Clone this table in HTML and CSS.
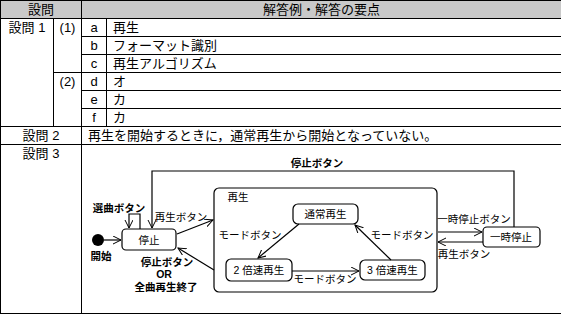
FILE: index.html
```html
<!DOCTYPE html>
<html lang="ja">
<head>
<meta charset="utf-8">
<title>解答例</title>
<link rel="stylesheet" href="styles.css">
</head>
<body>
<table class="answers">
  <colgroup>
    <col class="c1"><col class="c2"><col class="c3"><col class="c4">
  </colgroup>
  <tr class="head">
    <th colspan="2">設問</th>
    <th colspan="2">解答例・解答の要点</th>
  </tr>
  <tr>
    <td rowspan="6" class="q">設問 1</td>
    <td rowspan="3" class="sub">(1)</td>
    <td class="let">a</td>
    <td class="ans">再生</td>
  </tr>
  <tr><td class="let">b</td><td class="ans">フォーマット識別</td></tr>
  <tr><td class="let">c</td><td class="ans">再生アルゴリズム</td></tr>
  <tr>
    <td rowspan="3" class="sub">(2)</td>
    <td class="let">d</td>
    <td class="ans">オ</td>
  </tr>
  <tr><td class="let">e</td><td class="ans">カ</td></tr>
  <tr><td class="let">f</td><td class="ans">カ</td></tr>
  <tr>
    <td colspan="2" class="q">設問 2</td>
    <td colspan="2" class="ans">再生を開始するときに，通常再生から開始となっていない。</td>
  </tr>
  <tr class="diagram-row">
    <td colspan="2" class="q">設問 3</td>
    <td colspan="2" class="diagram">
      <svg class="state" viewBox="81 145 479 168" width="479" height="168" xmlns="http://www.w3.org/2000/svg">
        <defs>
          <marker id="arr" markerUnits="userSpaceOnUse" markerWidth="10" markerHeight="10" refX="8" refY="4" orient="auto">
            <path d="M0,0 L8,4 L0,8" fill="none" stroke="#000" stroke-width="1"/>
          </marker>
        </defs>
        <g fill="none" stroke="#000" stroke-width="1.2">
          <polyline points="513,227 513,171 151,171 151,228" marker-end="url(#arr)"/>
          <polyline points="139,229 139,214 128,214 128,228" marker-end="url(#arr)"/>
          <line x1="103" y1="240" x2="120" y2="240" marker-end="url(#arr)"/>
          <line x1="176" y1="234" x2="212" y2="220" marker-end="url(#arr)"/>
          <line x1="213" y1="270" x2="177" y2="248" marker-end="url(#arr)"/>
          <line x1="298" y1="224" x2="257" y2="258" marker-end="url(#arr)"/>
          <line x1="291" y1="271" x2="358" y2="271" marker-end="url(#arr)"/>
          <line x1="390" y1="260" x2="354" y2="225" marker-end="url(#arr)"/>
          <line x1="437" y1="232" x2="481" y2="232" marker-end="url(#arr)"/>
          <line x1="482" y1="242" x2="437" y2="242" marker-end="url(#arr)"/>
          <rect x="121" y="229" width="54" height="21" rx="4"/>
          <rect x="213" y="188" width="223" height="104" rx="5"/>
          <rect x="292" y="204" width="65" height="20" rx="5"/>
          <rect x="225" y="259" width="66" height="22" rx="5"/>
          <rect x="359" y="260" width="65" height="20" rx="5"/>
          <rect x="482" y="227" width="57" height="20" rx="4"/>
        </g>
        <circle cx="97" cy="240" r="6" fill="#000"/>
        <g class="lbl">
          <text x="316" y="167" class="b">停止ボタン</text>
          <text x="118" y="212" class="b">選曲ボタン</text>
          <text x="180" y="221">再生ボタン</text>
          <text x="148" y="244">停止</text>
          <text x="100" y="260" class="b">開始</text>
          <text x="166" y="266" class="b">停止ボタン</text>
          <text x="163" y="278" class="b">OR</text>
          <text x="165" y="291" class="b">全曲再生終了</text>
          <text x="237" y="201">再生</text>
          <text x="324.5" y="218">通常再生</text>
          <text x="249" y="239">モードボタン</text>
          <text x="258" y="274">2 倍速再生</text>
          <text x="391.5" y="274">3 倍速再生</text>
          <text x="324" y="283">モードボタン</text>
          <text x="401" y="239">モードボタン</text>
          <text x="473" y="223">一時停止ボタン</text>
          <text x="463" y="258">再生ボタン</text>
          <text x="510" y="241">一時停止</text>
        </g>
      </svg>
    </td>
  </tr>
</table>
</body>
</html>
```
FILE: styles.css
```css
html, body {
  margin: 0;
  padding: 0;
  background: #fff;
}
body {
  font-family: "Liberation Sans", "Noto Sans CJK JP", sans-serif;
  font-size: 13px;
  color: #000;
}
.answers {
  border-collapse: collapse;
  table-layout: fixed;
  width: 561px;
}
.c1 { width: 53px; }
.c2 { width: 28px; }
.c3 { width: 25px; }
.c4 { width: 455px; }
.answers th,
.answers td {
  border: 1px solid #000;
  padding: 0;
  height: 17px;
  line-height: 17px;
  white-space: nowrap;
  overflow: hidden;
}
.head th {
  background: #c9c9c9;
  font-weight: normal;
  text-align: center;
}
.q {
  text-align: center;
  vertical-align: top;
}
.sub {
  text-align: center;
  vertical-align: top;
}
.let {
  text-align: center;
}
.ans {
  padding-left: 6px !important;
  text-align: left;
}
.diagram {
  padding: 0;
  height: auto;
  line-height: 0 !important;
  vertical-align: top;
}
.state {
  display: block;
}
.lbl text {
  font-family: "Liberation Sans", "Noto Sans CJK JP", sans-serif;
  font-size: 10.5px;
  text-anchor: middle;
  fill: #000;
}
.lbl text.b {
  font-weight: bold;
}
```
